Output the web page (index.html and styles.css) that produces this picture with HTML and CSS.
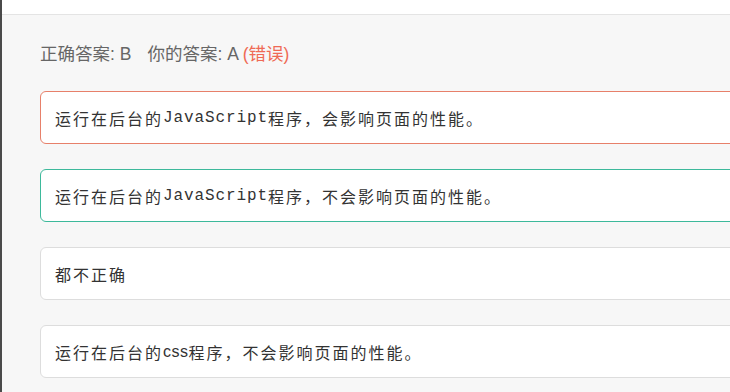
FILE: index.html
```html
<!DOCTYPE html>
<html lang="zh">
<head>
<meta charset="utf-8">
<link rel="stylesheet" href="styles.css">
</head>
<body>
<div class="frame">
  <div class="topbar"></div>
  <div class="content">
    <div class="result">
      <span>正确答案: B</span>
      <span class="mine">你的答案: A <span class="wrong">(错误)</span></span>
    </div>
    <div class="options">
      <div class="option option-wrong">运行在后台的<span class="mono">JavaScript</span>程序，会影响页面的性能。</div>
      <div class="option option-right">运行在后台的<span class="mono">JavaScript</span>程序，不会影响页面的性能。</div>
      <div class="option">都不正确</div>
      <div class="option">运行在后台的<span class="latin">css</span>程序，不会影响页面的性能。</div>
    </div>
  </div>
</div>
</body>
</html>
```
FILE: styles.css
```css
html, body {
  margin: 0;
  padding: 0;
  height: 100%;
  overflow: hidden;
  background: #f7f7f7;
}
.frame {
  height: 100%;
  border-left: 2px solid #4a4a4a;
  box-sizing: border-box;
  font-family: "Noto Sans CJK SC", "Liberation Sans", sans-serif;
}
.topbar {
  height: 14px;
  background: #ffffff;
  border-bottom: 1px solid #e4e4e4;
}
.content {
  padding: 27px 0 0 38px;
  width: 820px;
}
.result {
  font-family: "Liberation Sans", "Noto Sans CJK SC", sans-serif;
  font-size: 17.5px;
  line-height: 24px;
  color: #666666;
  display: flex;
  gap: 16px;
}
.wrong {
  color: #ef6a55;
}
.options {
  margin-top: 25px;
  display: flex;
  flex-direction: column;
  gap: 25px;
}
.option {
  height: 53px;
  box-sizing: border-box;
  background: #ffffff;
  border: 1px solid #dddddd;
  border-radius: 6px;
  padding: 0 14px;
  display: flex;
  align-items: center;
  font-size: 16px;
  letter-spacing: 2px;
  color: #333333;
  white-space: nowrap;
}
.option-wrong {
  border-color: #e7806a;
}
.option-right {
  border-color: #3db99b;
}
.mono {
  font-family: "Liberation Mono", monospace;
  letter-spacing: 0.9px;
}
.latin {
  font-family: "Liberation Sans", sans-serif;
  letter-spacing: 0.5px;
}
```
